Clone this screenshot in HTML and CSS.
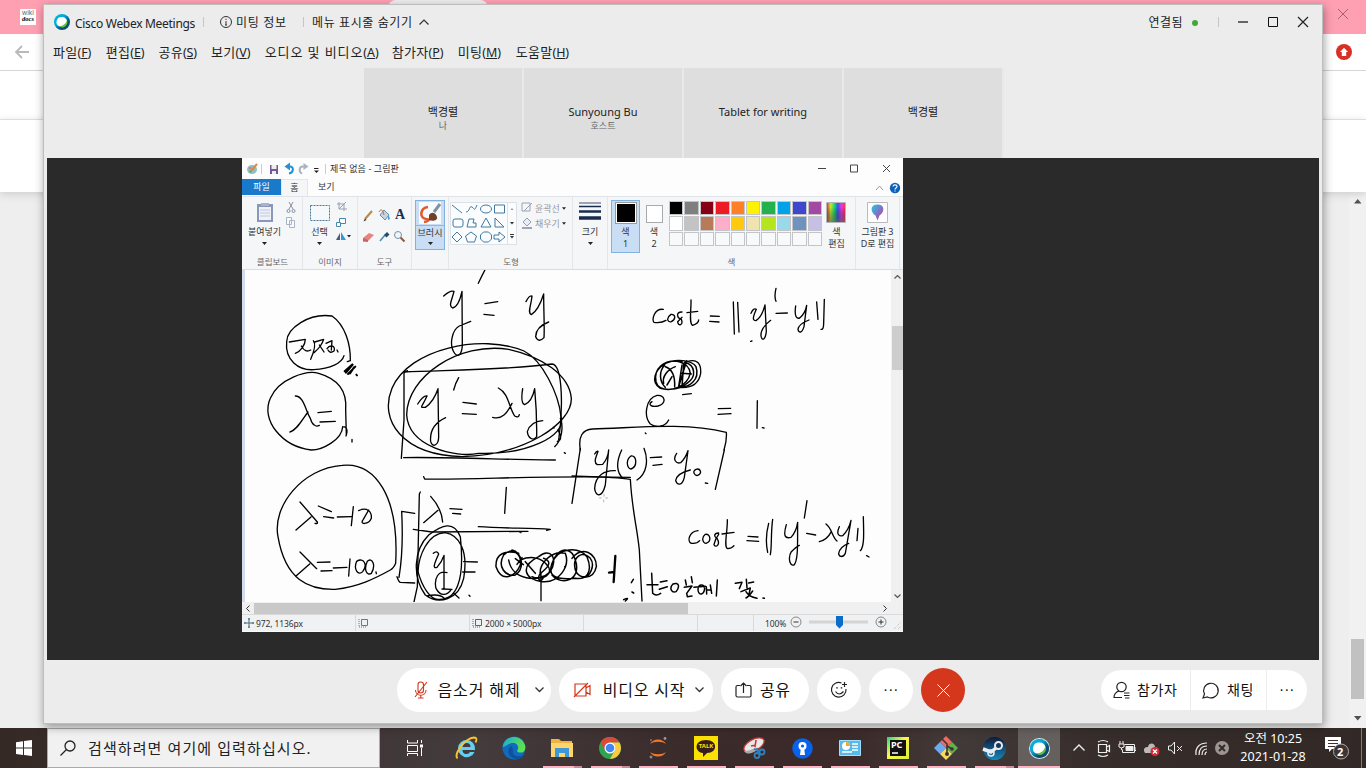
FILE: index.html
```html
<!DOCTYPE html>
<html lang="ko">
<head>
<meta charset="utf-8">
<title>Cisco Webex Meetings</title>
<link rel="stylesheet" href="styles.css">
</head>
<body>
<svg width="0" height="0" class="defs">
  <defs>
    <linearGradient id="ring" x1="0" y1="0" x2="1" y2="1"><stop offset="0" stop-color="#0bd"/><stop offset=".4" stop-color="#00a8dc"/><stop offset=".65" stop-color="#07507c"/><stop offset="1" stop-color="#17445f"/></linearGradient>
    <linearGradient id="rainbow"><stop offset="0" stop-color="#e33"/><stop offset=".2" stop-color="#be3"/><stop offset=".4" stop-color="#2d6"/><stop offset=".6" stop-color="#35e"/><stop offset=".8" stop-color="#e3e"/><stop offset="1" stop-color="#f34"/></linearGradient>
    <linearGradient id="dark" x1="0" y1="0" x2="0" y2="1"><stop offset=".2" stop-color="#000" stop-opacity="0"/><stop offset="1" stop-color="#555" stop-opacity=".6"/></linearGradient>
    <linearGradient id="pin" x1="0" y1="0" x2="1" y2="1"><stop offset="0" stop-color="#2cd"/><stop offset=".5" stop-color="#77c"/><stop offset="1" stop-color="#e36"/></linearGradient>
    <linearGradient id="edge" x1="0" y1="0" x2="1" y2=".3"><stop offset="0" stop-color="#1aa7dc"/><stop offset="1" stop-color="#5be34d"/></linearGradient>
    <linearGradient id="steam" x1="0" y1="0" x2="0" y2="1"><stop offset="0" stop-color="#101a3a"/><stop offset="1" stop-color="#1787bb"/></linearGradient>
    <linearGradient id="pycharm" x1="0" y1="0" x2="1" y2="1"><stop offset="0" stop-color="#21d789"/><stop offset=".45" stop-color="#fcf84a"/><stop offset="1" stop-color="#d8ef3d"/></linearGradient>
    <symbol id="webex" viewBox="0 0 16 16"><circle cx="8" cy="8" r="8" fill="url(#ring)"/><path d="M8 3a5 5 0 0 0-3 9.300C10 13 13.500 10 13 6.500A5.200 5.200 0 0 0 8 3z" fill="#fff"/><path d="M13 6a5.300 5.300 0 0 1-8 6.300C9.500 12 12 9.500 13 6z" fill="#62bf47"/></symbol>
    <symbol id="caret" viewBox="0 0 5 3"><path d="M0 0h5L2.500 3z" fill="#222"/></symbol>
  </defs>
</svg>
<div class="desktop">
  <div class="browser">
    <div class="tabstrip"><span class="favicon"><span>wiki</span><b>docs</b></span><i class="tab-peek"></i><svg class="tab-x" width="12" height="12" viewBox="0 0 12 12"><path d="M1 1l10 10M11 1L1 11" stroke="#a8606f" fill="none"/></svg></div>
    <div class="toolbar"><svg width="14" height="14" viewBox="0 0 14 14" fill="none" stroke="#b9b9b9" stroke-width="1.800"><path d="M14 7H1M7 1L1 7l6 6"/></svg><svg width="16" height="16" viewBox="0 0 16 16"><circle cx="8" cy="8" r="8" fill="#d93025"/><path d="M8 3.800l4 4.200H10.200v4H5.800V8H4z" fill="#fff"/></svg></div>
    <div class="bookmarks"></div>
    <div class="page-head"></div>
    <div class="page-body"><div class="scroll"><svg width="8" height="5"><path d="M0 4.500h7.500L3.700 0z" fill="#505050"/></svg><i></i><svg width="8" height="5"><path d="M0 0h7.500L3.700 4.500z" fill="#505050"/></svg></div></div>
  </div>

  <div class="webex">
    <div class="titlebar">
      <svg width="16" height="16"><use href="#webex"/></svg>
      <span class="app-name">Cisco Webex Meetings</span><i class="sep s1"></i>
      <svg class="info" width="12" height="12" viewBox="0 0 12 12" fill="none" stroke="#333"><circle cx="6" cy="6" r="5.500"/><path d="M6 5v4M6 2.800v1.200M5 9h2"/></svg>
      <span class="t-info">미팅 정보</span><i class="sep s2"></i>
      <span class="t-hide">메뉴 표시줄 숨기기</span>
      <svg width="10" height="6" viewBox="0 0 10 6" fill="none" stroke="#333" stroke-width="1.200"><path d="M.5 5.500L5 1l4.500 4.500"/></svg>
      <span class="grow"></span>
      <span class="t-conn">연결됨</span><i class="dot"></i><i class="sep s3"></i>
      <svg width="70" height="12" viewBox="0 0 70 12" fill="none"><path d="M0 6h10" stroke="#666" stroke-width="2"/><path d="M30.500 1.500h9v9h-9z" stroke="#111"/><path d="M60 1l10 10M70 1L60 11" stroke="#222" stroke-width="1.200"/></svg>
    </div>
    <div class="menubar">
      <span class="m41">파일<small>(<u>F</u>)</small></span><span class="m41">편집<small>(<u>E</u>)</small></span><span class="m41">공유<small>(<u>S</u>)</small></span><span class="m42">보기<small>(<u>V</u>)</small></span><span class="m115">오디오 및 비디오<small>(<u>A</u>)</small></span><span class="m54">참가자<small>(<u>P</u>)</small></span><span class="m46">미팅<small>(<u>M</u>)</small></span><span>도움말<small>(<u>H</u>)</small></span>
    </div>
    <div class="people">
      <div><b>백경렬</b><small>나</small></div><div><b>Sunyoung Bu</b><small>호스트</small></div><div><b>Tablet for writing</b></div><div><b>백경렬</b></div>
    </div>
    <div class="stage">
      <div class="paint">
        <div class="p-title">
          <svg width="88" height="14" viewBox="0 0 88 14"><ellipse cx="10" cy="7.500" rx="5" ry="4.500" fill="#8cc0c9"/><circle cx="8" cy="6" r="1" fill="#e66"/><circle cx="8.500" cy="9.500" r="1" fill="#3a7"/><path d="M9 9l6-7" stroke="#d9893a" stroke-width="2"/><path d="M19.500 2v10" stroke="#ccc"/><path d="M28 3h8v9h-8z" fill="#77579c"/><path d="M29.500 3h5v4h-5zM30 9h4v3h-4z" fill="#eee"/><path d="M46 4.500h2c4 0 4 6-1 7" fill="none" stroke="#2491d0" stroke-width="2"/><path d="M48 .5v8l-5.500-4z" fill="#2491d0"/><path d="M62 4.500h-1c-4.500 0-4 6-1 7" fill="none" stroke="#aab3c0" stroke-width="2"/><path d="M61.500 1v7l5-3.500z" fill="#aab3c0"/><path d="M72 6.500h4.500" stroke="#222"/><path d="M72 8.500h5l-2.500 2.500z" fill="#222"/><path d="M83.500 2v10" stroke="#ccc"/></svg>
          <span>제목 없음 - 그림판</span><i class="grow"></i>
          <svg width="74" height="9" viewBox="0 0 74 9" fill="none" stroke="#444"><path d="M0 4.500h8M32.500 1h7v7h-7zM65 1l7 7M72 1l-7 7"/></svg>
        </div>
        <div class="p-tabs"><span class="file">파일</span><span class="home">홈</span><span class="view">보기</span><i class="grow"></i><svg width="26" height="12" viewBox="0 0 26 12"><path d="M1 8l3.500-4L8 8" fill="none" stroke="#999"/><circle cx="20" cy="6" r="5.200" fill="#0b62b8"/><path d="M18 4.500c.3-2.200 4-2 4 0C22 6 20 6 20 7.500M20 8.600v1" stroke="#fff" stroke-width="1.200" fill="none"/></svg></div>
        <div class="ribbon">
          <section class="g-clip"><div class="row">
            <div class="tool paste"><svg width="18" height="22" viewBox="0 0 18 22"><path d="M1 2h16v18H1z" fill="#8998ba"/><path d="M3 5h12v13H3z" fill="#eef1f8"/><path d="M5 1h8v3H5z" fill="#a9b4c9"/><path d="M4 8h10M4 11h10M4 14h10" stroke="#bfc8de"/></svg><span>붙여넣기</span><svg width="5" height="3"><use href="#caret"/></svg></div>
            <svg width="12" height="34" viewBox="0 0 12 34" fill="none" stroke="#8790a0"><path d="M3 0l4 7M7 0l-4 7"/><circle cx="2.500" cy="9" r="1.500"/><circle cx="7.500" cy="9" r="1.500"/><path d="M.5 15.500h5v7h-5zM3.500 18.500h5v7h-5z" stroke="#aab2c5" fill="#fafbfd"/></svg>
          </div><h6>클립보드</h6></section>
          <section class="g-img"><div class="row">
            <div class="tool"><svg width="20" height="22" viewBox="0 0 20 22"><path d="M.5 3.500h19v15H.5z" fill="#f4f9fc" stroke="#47799b" stroke-dasharray="2 1"/></svg><span>선택</span><svg width="5" height="3"><use href="#caret"/></svg></div>
            <svg width="16" height="42" viewBox="0 0 16 42" fill="none"><path d="M3 0v7h8M1 2h7v7M3 7l7-7" stroke="#98a1b5"/><path d="M3.500 16.500h6v5h-6z" stroke="#4588b0" fill="#fff"/><path d="M.5 20.500h4v4h-4z" stroke="#4588b0" fill="#fff"/><path d="M0 38l4-7v7z" fill="#557"/><path d="M5 30l5 8H5z" fill="#2f9bd8"/><path d="M11 33h4l-2 2.500z" fill="#222"/></svg>
          </div><h6>이미지</h6></section>
          <section class="g-tools"><div class="row"><svg width="46" height="46" viewBox="0 0 46 46"><path d="M3 17L10 9" stroke="#b9884d" stroke-width="2"/><path d="M1.500 19.500l1.500-3 1.500 1.500z" fill="#333"/><path d="M18 13l4-5 5 5-4 5z" fill="#c9d4e2" stroke="#6d8aa9"/><path d="M17 10c2-4 4-2 5 3" stroke="#b37350" fill="none"/><path d="M26 11l2 6-2 1z" fill="#46a0d8"/><path d="M1 36l6-5 5 2-6 6-5 1z" fill="#e88480"/><path d="M1 36l5 2v2l-5-1z" fill="#c95f5f"/><path d="M18 39l5-6" stroke="#4f8eb5" stroke-width="1.600"/><path d="M22 33l3-3 2.500 2.500-3 3z" fill="#294b6c"/><circle cx="36" cy="33" r="3.500" fill="#eef5fb" stroke="#7890a8"/><path d="M38.500 35.500l4 4" stroke="#8a5b43" stroke-width="2"/></svg><b class="letter">A</b></div><h6>도구</h6></section>
          <section class="g-brush"><div class="brush"><svg width="22" height="22" viewBox="0 0 22 22"><path d="M0 0h22v22H0z" fill="#f8fbfd"/><path d="M9 5C1 6 0 16 7 17c4 0 4 2-2 3" stroke="#e15a2b" stroke-width="2.600" fill="none"/><path d="M21 2l-6 8" stroke="#7f93a5" stroke-width="3"/><path d="M10 13c3-4 7-2 8 2 1 3-4 5-8 3z" fill="#6d412a"/></svg><span>브러시</span><svg width="5" height="3"><use href="#caret"/></svg></div></section>
          <section class="g-shapes"><div class="row">
            <svg width="70" height="43" viewBox="0 0 70 43" fill="none" stroke="#41799e"><path d="M.5.5h57v42H.5zM57.500.5h9v42h-9z" fill="#fbfcfe" stroke="#dce1e8"/><path d="M2 3l10 8M16 10c4 0 3-7 6-5s2 5 5-2"/><ellipse cx="36" cy="7" rx="5.500" ry="4"/><path d="M44.500 3h10v8h-10z"/><rect x="3" y="17" width="10" height="8" rx="2"/><path d="M17 25l2-8h5l-1 4h3v4zM31 25l5-9 5 9zM45 16v9h9zM7 30l5 5-5 5-5-5zM21 30l5.500 4-2 6h-7l-2-6zM33.500 30h5l3 3v4l-3 3h-5l-3-3v-4zM44 33h5v-3l6 5-6 5v-3h-5z"/><path d="M60.500 8l1.500-2 1.500 2z" fill="#999" stroke="none"/><path d="M60 20h4l-2 2.500zM60 34h4l-2 2.500zM60 32h4v1h-4z" fill="#333" stroke="none"/></svg>
            <div class="fillcol"><span><svg width="12" height="12" viewBox="0 0 12 12" fill="none" stroke="#9ba4b2"><path d="M1 1h8v8H1zM3 9l8-8"/></svg>윤곽선 <svg width="4" height="3"><use href="#caret"/></svg></span><span><svg width="12" height="12" viewBox="0 0 12 12"><path d="M2 5l4-4 4 4-4 4z" fill="#e9eef4" stroke="#929daf"/><path d="M1 10h10v2H1z" fill="#9ba7b8"/></svg>채우기 <svg width="4" height="3"><use href="#caret"/></svg></span></div>
          </div><h6>도형</h6></section>
          <section class="g-size"><div class="tool"><svg width="22" height="22" viewBox="0 0 22 22" stroke="#172c4d"><path d="M0 1h22" stroke-width=".8"/><path d="M0 4.500h22" stroke-width="1.500"/><path d="M0 9.500h22" stroke-width="2.500"/><path d="M0 16h22" stroke-width="3.500"/></svg><span>크기</span><svg width="5" height="3"><use href="#caret"/></svg></div></section>
          <section class="g-color"><div class="row">
            <div class="tool c1"><i></i><span>색<br>1</span></div><div class="tool c2"><i></i><span>색<br>2</span></div>
            <div class="swatches"><i class="k1"></i><i class="k2"></i><i class="k3"></i><i class="k4"></i><i class="k5"></i><i class="k6"></i><i class="k7"></i><i class="k8"></i><i class="k9"></i><i class="k10"></i><i class="k11"></i><i class="k12"></i><i class="k13"></i><i class="k14"></i><i class="k15"></i><i class="k16"></i><i class="k17"></i><i class="k18"></i><i class="k19"></i><i class="k20"></i><i></i><i></i><i></i><i></i><i></i><i></i><i></i><i></i><i></i><i></i></div>
            <div class="tool edit"><svg width="20" height="21" viewBox="0 0 20 21"><path d="M.5.5h19v20H.5z" fill="#fff" stroke="#b5b5b5"/><path d="M1 1h18v19H1z" fill="url(#rainbow)"/><path d="M1 1h18v19H1z" fill="url(#dark)"/></svg><span>색<br>편집</span></div>
          </div><h6>색</h6></section>
          <section class="g-3d"><div class="tool edit"><svg width="21" height="21" viewBox="0 0 21 21"><path d="M.5.500h20v20H.5z" fill="#fdfdfe" stroke="#bbb"/><path d="M10.500 2.500c8 0 7 8 2 11l-2 5-2-5c-5-3-6-11 2-11z" fill="url(#pin)"/></svg><span>그림판 3<br>D로 편집</span></div></section>
        </div>
        <div class="p-main">
          <svg class="ink" width="646" height="332" viewBox="245 270 646 332">
            <g transform="translate(242 270) scale(.33333)">
              <path d="M734 -10Q718 20 709 40M605 78Q625 60 636 64C630 90 618 108 632 114Q650 110 660 64L661 225C660 250 650 265 638 250C620 225 630 180 652 168L686 154M729 101L767 95M726 133L756 136M852 95Q862 75 870 78C868 105 855 130 868 134Q890 120 905 72C905 120 908 180 906 203Q890 220 881 200Q882 170 920 156"/>
              <path d="M270 138C200 128 135 175 134 215C128 270 170 302 215 299C265 296 300 280 306 257M270 138C310 165 326 225 325 272L316 275M142 216L190 208C190 225 175 245 160 250M178 228Q190 250 206 240M214 212Q225 225 206 268M218 216L245 208C238 230 225 240 216 248M232 225L246 246M252 220L270 212L268 240M255 236C265 222 282 228 276 243Q264 252 258 240M285 240l3 6"/>
              <path d="M308 304l22-20M312 308l20-24M318 312l22-22M324 310l12-18M343 314l2 2" stroke-width="6"/>
              <path d="M302 470C300 510 240 540 208 540C120 530 55 450 85 385C110 325 195 300 230 310C300 330 315 375 311 420L313 494M302 470C320 470 315 490 312 498M160 378C185 378 190 420 205 445C210 465 222 472 232 466M198 426C180 450 165 480 144 486M228 428L268 424M234 456L280 454M330 508v8"/>
              <path d="M486 306C620 300 800 300 930 282C965 285 962 430 950 510M486 306V450L478 565M485 563C600 560 820 570 940 570M487 308L496 302"/>
              <path d="M846 243C720 190 500 235 450 355C410 450 480 555 660 560C850 555 990 460 988 385C982 315 900 260 800 238C650 215 495 320 494 435C500 530 640 565 710 550C850 555 975 500 957 440C950 370 900 270 846 243"/>
              <path d="M650 323Q640 340 635 360M527 402Q545 375 555 378C540 412 530 414 550 412Q575 395 588 356L590 500C590 525 572 535 566 515C562 475 585 455 611 443M663 397L703 402M661 431L703 433M769 354C800 370 800 410 818 438Q830 445 832 434M810 400C795 430 780 450 752 442M842 356Q835 400 848 404Q870 395 878 356Q885 430 884 500C875 515 858 505 856 485Q865 455 902 452M934 472l2 2M955 445C965 470 960 510 938 530M948 480Q965 510 946 514"/>
            </g>
            <g transform="translate(242 450) scale(.33333)">
              <path d="M461 340C472 140 400 35 300 46C180 55 90 170 108 260C130 390 200 420 280 418C350 410 400 385 445 360Q455 355 461 340M174 156L226 216Q228 222 219 220M207 201L162 240M229 168L268 185M245 200L275 204M286 201L328 200M334 170L328 227M350 182C375 170 390 185 388 205C380 225 350 225 364 208L380 180M174 306L224 356M203 342L162 378M226 337L264 336M237 363L270 362M274 354L315 352M324 327L320 378M344 334C333 360 350 378 362 365C378 345 365 320 344 334M376 334C364 360 375 378 388 370C403 345 390 320 376 334M402 366l1 5"/>
              <path d="M518 190L479 184C483 260 478 340 471 382M465 380Q470 395 475 397L518 399M545 80L548 87C700 90 900 75 1165 82M535 126L532 132L526 410L516 456M566 139C590 165 600 190 602 216M588 181L545 218M624 176L660 178M632 190L656 192M793 112L788 190M514 238L570 246L858 244M829 244l8 4M709 230C780 235 860 234 925 238L914 241"/>
              <path d="M655 260C635 210 600 225 560 255C515 300 510 380 550 435C590 465 650 450 665 385C680 300 650 255 610 248C555 250 530 320 528 365C540 410 565 450 590 448C640 450 670 400 655 260M574 310Q585 300 590 312C575 345 572 356 585 352Q600 335 606 316L606 417M615 368C590 360 575 385 582 415C595 440 615 438 628 418M630 418L600 417M555 438Q590 430 606 444M635 430l16 14M665 335L706 336M662 366L699 366M681 436l3 3M967 8l3 2M897 370L897 452"/>
              <path class="scribble" d="M830 310C790 300 760 310 762 350C780 400 820 380 835 345C840 310 810 290 785 315C765 350 790 380 820 375C850 355 840 305 810 300M800 330C810 390 890 400 925 365C950 325 925 290 890 320C830 350 850 390 900 395C950 400 985 350 970 310C930 300 890 340 895 375M850 335L880 370M835 330C870 315 900 325 915 345C940 370 900 395 870 380M905 325C935 335 915 355 895 370C880 390 900 400 905 380M930 340C950 290 1010 290 1035 320C1055 370 1030 390 1000 385C940 390 905 380 940 320C960 290 990 295 1000 330C1020 390 960 410 930 375M990 325C1020 285 1065 310 1063 350C1055 390 1010 390 1000 360C990 320 1020 300 1045 325C1060 345 1045 385 1020 380M820 326l24 18M825 343l15-20M968 350l2 2"/>
            </g>
            <g transform="translate(572 270) scale(.33333)">
              <path d="M274 118C245 115 240 150 246 157Q268 160 282 151M297 133C280 145 288 158 298 155C315 145 308 132 297 133M330 126C310 125 315 145 328 148C335 166 318 170 317 155L330 142M357 90C358 120 350 160 362 166Q380 160 380 150M345 128L377 124M415 138L442 139M413 154L441 156M484 96L487 192M497 97L501 186M612 55Q606 80 612 94M537 130Q545 112 553 118C543 140 540 152 552 152Q570 140 579 105L583 185C580 210 570 214 567 198Q565 175 596 151M612 130L646 129M671 108C667 135 672 148 683 144Q700 130 704 106L696 170C690 190 680 190 678 178Q680 162 711 150M734 96L738 148M757 88L755 160Q755 180 747 178M536 214l4-1"/>
              <path class="scribble" d="M270 288C300 260 350 275 355 310C345 350 300 365 265 355C235 335 248 300 280 280C310 265 360 270 372 290C385 330 350 355 320 350L344 272M330 275C270 265 245 300 252 335C260 370 325 360 345 340C375 320 370 285 338 277M278 285C260 305 262 335 280 352M310 290C285 300 270 320 275 340M280 290Q310 300 308 350M330 285L320 350M335 282L330 350M330 310L358 312M285 345L300 320"/>
              <path d="M345 275C375 265 388 280 386 310C380 345 355 355 320 352M332 374L358 371M240 395C225 405 242 412 258 408C285 400 280 375 255 376C220 385 215 440 235 462C255 475 280 470 290 450M439 416L476 415M438 433L477 431M556 392L555 475M571 473l5 1M220 489l2 2M25 540Q15 480 62 477C180 475 330 455 463 487Q465 510 456 540"/>
            </g>
            <g transform="translate(572 450) scale(.33333)">
              <path d="M25 -5L0 160M457 0L430 118M68 12Q74 2 78 4C70 25 65 38 76 44L92 43Q108 25 110 0L100 105C90 145 70 140 68 115C70 75 100 60 130 62M149 0C130 40 135 70 154 86M177 18C160 30 165 55 177 57C197 50 195 15 177 18M216 -5C230 30 225 70 195 90M235 23L269 21M243 46L270 43M314 10C300 30 314 42 326 38Q340 25 348 2L337 82C330 110 315 105 311 92Q314 70 355 60M372 58C358 65 370 78 377 76C392 70 385 54 372 58M400 99l7 1M0 78C50 80 120 80 175 88C180 180 195 230 202 300L210 453M705 152L697 204"/>
              <path d="M378 242C350 245 345 275 358 280Q375 282 383 272M400 253C385 265 395 280 402 280C420 275 415 250 400 253M440 249C424 250 426 260 435 265C447 285 430 295 426 284Q430 265 440 253M466 209C467 245 454 292 467 296Q480 295 486 287M450 252L486 247M528 259L558 261M525 272L560 274M590 220Q578 265 587 307M602 208C596 250 600 290 595 314M643 224C633 258 639 267 657 262Q673 245 677 217C676 270 680 330 666 345C652 350 648 320 658 305Q673 290 682 286M704 250L731 255M762 222C780 235 780 260 795 273M778 245Q765 270 742 275M802 230C792 252 800 260 812 257Q830 240 837 211L820 310C812 325 800 320 800 310Q804 290 830 280M858 235L855 272M874 200C875 245 878 290 865 302M884 317l7 4"/>
              <path d="M130 318L125 396M111 368L126 366" stroke-width="7"/>
              <path d="M184 388l-6 10M180 426l5 3M155 449Q175 440 160 453M239 370L242 430Q252 440 266 430M225 404L258 404M265 396L285 392M262 418L286 410M303 402C290 415 300 430 312 425C325 410 320 395 303 402M340 390l3 15M358 380l3 18M337 412L360 408L344 430L346 440L360 438M366 412L400 409M378 420C378 402 395 400 398 415C396 435 380 438 378 420M403 410l1 22M415 405L419 430M404 420h12M436 390L433 438M490 400L510 397L502 416M523 388L525 413M530 399L545 396M507 425L535 414L530 438M522 425Q530 440 555 445M542 423Q530 440 522 444M573 444l4 1" stroke-width="4.500"/>
              <path d="M96 133v7M95 150v7M82 144h7M101 144h7" stroke="#999" stroke-width="2" stroke-dasharray="2 2"/>
            </g>
          </svg>
          <div class="vbar"><svg width="7" height="4"><path d="M.5 3.500l3-3 3 3" fill="none" stroke="#555" stroke-width="1.200"/></svg><i></i><svg width="7" height="4"><path d="M.5.500l3 3 3-3" fill="none" stroke="#555" stroke-width="1.200"/></svg></div>
        </div>
        <div class="hbar"><svg width="4" height="7"><path d="M3.500.500l-3 3 3 3" fill="none" stroke="#333"/></svg><i></i><svg width="4" height="7"><path d="M.5.500l3 3-3 3" fill="none" stroke="#333"/></svg></div>
        <div class="status">
          <span class="st1"><svg width="10" height="10" viewBox="0 0 10 10" stroke="#467"><path d="M0 5h10M5 0v10M1 4v2M9 4v2M4 1h2M4 9h2"/></svg>972, 1136px</span>
          <span class="st2"><svg width="11" height="10" viewBox="0 0 11 10" fill="none" stroke="#678"><path d="M3.500 1.500h6v6h-6z"/><path d="M1 1v8h8" stroke-dasharray="1 1"/></svg></span>
          <span class="st3"><svg width="11" height="10" viewBox="0 0 11 10" fill="none" stroke="#567"><path d="M3.500 1.500h6v6h-6z"/><path d="M1 1v8h8" stroke-dasharray="1 1"/></svg>2000 × 5000px</span>
          <span class="st4"></span><span class="st5"></span>
          <span class="st6">100%<svg width="112" height="14" viewBox="0 0 112 14" fill="none" stroke="#888"><circle cx="6" cy="6" r="5"/><path d="M3.500 6h5" stroke="#333"/><path d="M19 6h59" stroke="#d4d4d4" stroke-width="3"/><path d="M46 0h7v9l-3.500 3.500L46 9z" fill="#0b6dc9" stroke="none"/><circle cx="91" cy="6" r="5"/><path d="M88.500 6h5M91 3.500v5" stroke="#333"/><path d="M104 13l7-7M108 13l3-3" stroke="#bbb" stroke-dasharray="1 1"/></svg></span>
        </div>
      </div>
    </div>
    <div class="controls">
      <button class="pill mute"><svg width="14" height="18" viewBox="0 0 14 18" fill="none" stroke="#d4371c" stroke-width="1.100"><rect x="4" y="1" width="5.500" height="11" rx="2.700"/><path d="M1.500 9c0 7 10.500 7 10.500 0M6.800 14v3M4 17h5.500M1 16L13 1"/></svg><span>음소거 해제</span><svg width="9" height="6"><path d="M.5.500l4 4 4-4" fill="none" stroke="#333" stroke-width="1.300"/></svg></button>
      <button class="pill video"><svg width="17" height="14" viewBox="0 0 17 14" fill="none" stroke="#d4371c" stroke-width="1.200"><path d="M1 1h11v12H1zM0 14L14 0M12 5l4-2.500v9L12 9"/></svg><span>비디오 시작</span><svg width="9" height="6"><path d="M.5.500l4 4 4-4" fill="none" stroke="#333" stroke-width="1.300"/></svg></button>
      <button class="pill share"><svg width="17" height="16" viewBox="0 0 17 16" fill="none" stroke="#222" stroke-width="1.200"><path d="M5 3.500H2.500Q1 3.500 1 5v8.500Q1 15 2.500 15h12q1.500 0 1.500-1.500V5q0-1.500-1.500-1.500H12M8.500 11V1M5.500 4l3-3 3 3"/></svg><span>공유</span></button>
      <button class="round"><svg width="17" height="18" viewBox="0 0 17 18" fill="none" stroke="#222" stroke-width="1.200"><path d="M10.500 2A7.300 7.300 0 1 0 15 8M4.500 10.500q3.500 5 8 0M13.500 1v5M11 3.500h5"/><path d="M6 6.200v1.300M10.500 6.200v1.300" stroke-width="1.600"/></svg></button>
      <button class="round dots">•••</button>
      <button class="round end"><svg width="13" height="13"><path d="M.5.500l12 12M12.500.500l-12 12" stroke="#fff"/></svg></button>
      <div class="right">
        <button class="r1"><svg width="17" height="18" viewBox="0 0 17 18" fill="none" stroke="#222" stroke-width="1.200"><circle cx="8.500" cy="6" r="4.700"/><path d="M6 10c-3 1-5 3-5 6.500h8M11 12h5.500M11 14.500h5.500M12 17h4.500"/></svg><span>참가자</span></button>
        <button class="r2"><svg width="17" height="17" viewBox="0 0 17 17" fill="none" stroke="#222" stroke-width="1.200"><path d="M1 16l1.500-4A7.300 7.300 0 1 1 5.500 15z"/></svg><span>채팅</span></button>
        <button class="r3 dots">•••</button>
      </div>
    </div>
  </div>

  <div class="taskbar">
    <div class="start"><svg width="16" height="16" viewBox="0 0 16 16" fill="#fff"><path d="M0 2.300L7 1.200v6.400H0zM8 1l8-1v7.600H8zM0 8.500h7v6.400l-7-1zM8 8.500h8V16l-8-1z"/></svg></div>
    <div class="search"><svg width="16" height="16" viewBox="0 0 16 16" fill="none" stroke="#222" stroke-width="1.300"><circle cx="10" cy="6" r="5"/><path d="M6.500 9.500L.5 15.500"/></svg><span>검색하려면 여기에 입력하십시오.</span></div>
    <div class="apps">
      <div class="view-tasks"><svg width="18" height="18" viewBox="0 0 18 18" fill="none" stroke="#fff"><path d="M1.500 1v3h10V1M1.500 6.500h10v6h-10zM1.500 17v-2.500h10V17M15.500 1v3M15.500 9v8"/><path d="M14 5.500h3v3h-3z" fill="#fff" stroke="none"/></svg></div>
      <div><svg width="24" height="24" viewBox="0 0 24 24" fill="none"><path fill-rule="evenodd" d="M12.500 4a8.500 8.500 0 0 1 8.500 10H8.500a4 4 0 0 0 7.500 2h4.500A8.600 8.600 0 1 1 12.500 4zM8.500 11h8a4 4 0 0 0-8 0z" fill="#65cff3"/><path d="M3.500 22.500C-1 19 11 2 20 1.500c3 0 3 2 1.500 5" stroke="#f5c62b" stroke-width="1.800"/></svg></div>
      <div><svg width="24" height="24" viewBox="0 0 24 24"><circle cx="12" cy="12" r="11.500" fill="#0f6bbd"/><path d="M.6 11C2-1 19-3 23 9c2 8-6 9-8 6 3-4 0-8-4-8-5 0-7 4-10.400 4z" fill="url(#edge)"/><path d="M9 10c-6 5-1 13 6 13 4 0 6-2 7-4-7 3-12 0-11-4 0-3-1-4-2-5z" fill="#12509e"/></svg></div>
      <div class="open multi"><svg width="22" height="20" viewBox="0 0 22 20"><path d="M0 1h8l2 2h11v16H0z" fill="#f0b33f"/><path d="M0 5h22v14H0z" fill="#fed56c"/><path d="M4 19v-9h14v9h-4v-4H8v4z" fill="#3f98d5"/></svg></div>
      <div class="open multi"><svg width="22" height="22" viewBox="0 0 22 22"><circle cx="11" cy="11" r="11" fill="#2ea44f"/><path d="M11 0a11 11 0 0 1 9.500 5.500H11A6 6 0 0 0 6 14L1.500 5.500A11 11 0 0 1 11 0z" fill="#d94a3d"/><path d="M20.500 5.500A11 11 0 0 1 11 22l5-9c1-3 0-6-5-7.500z" fill="#f9cb3e"/><circle cx="11" cy="11" r="5.500" fill="#fff"/><circle cx="11" cy="11" r="4.300" fill="#4285f4"/></svg></div>
      <div class="open"><svg width="20" height="22" viewBox="0 0 20 22"><path d="M2 7C5 1 15 1 18 7c-4-3-12-3-16 0zM2 15c3 6 13 6 16 0-4 3-12 3-16 0z" fill="#f37726"/><circle cx="17" cy="1.500" r="1.400" fill="#999"/><circle cx="3" cy="3" r="1" fill="#777"/><circle cx="3" cy="20" r="1.500" fill="#888"/></svg></div>
      <div class="open kakao"><svg width="24" height="24" viewBox="0 0 24 24"><path d="M0 0h24v24H0z" fill="#fae100"/><path d="M12 4c12 0 12 13 1 13l-4 4v-4C0 16 0 4 12 4z" fill="#371d1e"/></svg><b>TALK</b></div>
      <div class="open"><svg width="24" height="22" viewBox="0 0 24 22"><ellipse cx="12" cy="8" rx="11" ry="5.500" transform="rotate(-28 12 8)" fill="#e9e9e9" stroke="#c9403c" stroke-width="1.200"/><path d="M2 14c3 4 8 3 13-1l-1-3c-4 3-9 4-12 4z" fill="#aaa"/><path d="M9 9l5-1M13 10l1-7" stroke="#c33" stroke-width="1.600" fill="none"/><g fill="none" stroke="#2d83bf" stroke-width="1.800"><circle cx="15" cy="18.500" r="2.500"/><circle cx="20" cy="15" r="2.500"/><path d="M16 16l-1-5M18 14l-6-2"/></g></svg></div>
      <div class="open"><svg width="21" height="21" viewBox="0 0 21 21"><circle cx="10.500" cy="10.500" r="10.200" fill="#0763ed"/><circle cx="10.500" cy="8" r="4" fill="#fff"/><path d="M9 9h3l1 8H8z" fill="#fff"/><circle cx="10.500" cy="8" r="1.600" fill="#0763ed"/></svg></div>
      <div class="open"><svg width="22" height="16" viewBox="0 0 22 16"><path d="M.5.500h21v15H.5z" fill="#58b8e8" stroke="#9de0ff"/><circle cx="7" cy="6" r="4" fill="#fff"/><path d="M7 6V2a4 4 0 0 1 4 4z" fill="#eea92a"/><path d="M13 4h6M13 7h6M13 10h6M3 12h10" stroke="#fff" stroke-width="1.700"/></svg></div>
      <div class="open pc"><svg width="22" height="22" viewBox="0 0 22 22"><path d="M0 0h22v22H0z" fill="url(#pycharm)"/><path d="M3 3h16v16H3z" fill="#111"/><path d="M5 16h6" stroke="#fff" stroke-width="1.500"/></svg><b>PC</b></div>
      <div class="open"><svg width="24" height="24" viewBox="0 0 24 24"><path d="M6 6l6-6 6 6-6 6z" fill="#ef6b60"/><path d="M0 12l6-6 6 6-6 6z" fill="#6daaf0"/><path d="M12 12l6-6 6 6-6 6z" fill="#62b24b"/><path d="M6 18l6-6 6 6-6 6z" fill="#f6db62"/><path d="M8 3l5 5v11M13 10l5 3" stroke="#3b3435" stroke-width="1.600" fill="none"/><circle cx="13" cy="18" r="2" fill="#3b3435"/><circle cx="18" cy="13" r="1.800" fill="#3b3435"/></svg></div>
      <div class="open multi"><svg width="23" height="23" viewBox="0 0 23 23"><circle cx="11.500" cy="11.500" r="11.500" fill="url(#steam)"/><path d="M0 12l8 3 5-4" stroke="#e9edf1" stroke-width="3.500" fill="none"/><circle cx="8" cy="16" r="3" fill="none" stroke="#e9edf1" stroke-width="1.500"/><circle cx="15.500" cy="8.500" r="3.500" fill="#1b3358" stroke="#e9edf1" stroke-width="2"/></svg></div>
      <div class="open active"><svg class="wx" width="19" height="19"><use href="#webex"/></svg></div>
    </div>
    <div class="tray">
      <svg width="156" height="20" viewBox="0 0 156 20" fill="none" stroke="#eee"><path d="M.5 12.500L6 7l5.500 5.500" stroke-width="1.400"/><path d="M25.500 6.500h8v8h-8zM33.500 9l3-1.500v6l-3-1.500M25 4q5-3 10 0M25 17q5 3 10 0" stroke-width="1.200"/><path d="M51.500 6.500h10v8h-12v-3M62 9v3.500h1"/><path d="M53 8.500h7v4h-7z" fill="#eee"/><path d="M47 3v3M50 3v3M46 6h5v3q-3 2-5 0zM48.500 10v2" /><path d="M72 15c-3-5 1-6 3-6 1-5 7-4 7 0 4 0 4 5 2 6z" fill="#bbb" stroke="none"/><circle cx="82" cy="13.500" r="4.500" fill="#d52b35" stroke="none"/><path d="M80 11.500l4 4M84 11.500l-4 4" stroke="#fff" stroke-width="1.400"/><path d="M95.500 8h2.500l3.500-4v12L98 12h-2.500zM104 8l5 5M109 8l-5 5"/><path d="M123 17C122 9 127 5 134 5M126 17c0-6 3-9 8-9M129 17c0-4 2-6 5-6M132 17q0-3 2-3" stroke-width="1.200"/><circle cx="149" cy="10" r="7" fill="#9c9693" stroke="none"/><path d="M146 7l6 6M152 7l-6 6" stroke="#332b2a" stroke-width="2"/></svg>
      <div class="clock"><span>오전 10:25</span><span>2021-01-28</span></div>
      <div class="notice"><svg width="24" height="24" viewBox="0 0 24 24"><path d="M0 1h16v12H7l-3 3v-3H0z" fill="#fff"/><path d="M3 4.500h10M3 7.500h10M3 10.500h7" stroke="#3b3130"/><circle cx="16" cy="15.500" r="7.500" fill="#3d3534" stroke="#aaa"/></svg><b>2</b></div><i class="show"></i>
    </div>
  </div>
</div>
</body>
</html>
```
FILE: styles.css
```css
* { box-sizing: border-box; }
body { margin: 0; overflow: hidden; font-family: "Noto Sans", "Noto Sans CJK KR", sans-serif; color: #222; }
svg { display: block; flex: none; overflow: visible; }
.defs { position: absolute; }
i { font-style: normal; flex: none; }
.grow { flex: 1; }
.desktop { position: relative; width: 1366px; height: 768px; overflow: hidden; display: flex; flex-direction: column; white-space: nowrap; }

.browser { height: 728px; display: flex; flex-direction: column; background: #eee; }
.tabstrip { height: 34px; background: #ff9fb2; display: flex; align-items: flex-start; padding: 9px 17px 0 20px; }
.favicon { width: 16px; height: 16px; background: #fff; font-size: 6.5px; line-height: 7px; text-align: center; color: #666; display: flex; flex-direction: column; }
.favicon b { font-family: "Liberation Serif", serif; font-style: italic; color: #000; line-height: 6px; }
.tab-peek { width: 100px; height: 14px; margin: -9px auto 0 352px; border-radius: 8px 8px 0 0; background: #eee; }
.tab-x { margin-top: -1px; }
.toolbar { height: 37px; background: #fff; border-bottom: 1px solid #d5d5d5; display: flex; align-items: center; justify-content: space-between; padding: 0 14px 0 15px; }
.bookmarks { height: 49px; background: #fff; border-bottom: 1px solid #e3e3e3; }
.page-head { height: 72px; background: #fff; box-shadow: 0 2px 8px #ccc; z-index: 1; }
.page-body { flex: 1; display: flex; justify-content: flex-end; }
.scroll { width: 17px; background: #f1f1f1; display: flex; flex-direction: column; align-items: center; padding: 7px 0 7px; }
.scroll i { width: 13px; height: 60px; background: #c1c1c1; margin-top: 435px; margin-bottom: auto; }

.webex { position: absolute; z-index: 2; left: 43px; top: 4px; width: 1280px; height: 720px; border: 1px solid #bebebe; background: #ececec; box-shadow: 1px 3px 9px rgba(0,0,0,.38); display: flex; flex-direction: column; }
.titlebar { height: 34px; padding: 0 14px 0 10px; display: flex; align-items: center; font-size: 12px; }
.app-name { width: 121px; margin-left: 5px; letter-spacing: -.3px; padding-top: 2px; }
.sep { width: 1px; height: 10px; background: #c6c6c6; }
.s1 { margin-left: 7px; }
.info { margin-left: 16px; }
.t-info { width: 52px; margin-left: 4px; letter-spacing: .7px; }
.s2 { margin-left: 15px; }
.t-hide { width: 102px; margin: 0 5px 0 8px; letter-spacing: .6px; }
.t-conn { letter-spacing: .5px; }
.dot { width: 6px; height: 6px; border-radius: 3px; background: #43a83c; margin: 1px 20px 0 9px; }
.s3 { margin-right: 19px; }
.menubar { height: 29px; padding-left: 9px; display: flex; gap: 12px; align-items: center; font-size: 13px; line-height: 20px; padding-bottom: 2px; }
.menubar span { letter-spacing: .3px; }
.menubar small { font-size: 12.500px; letter-spacing: -.1px; }
.menubar u { text-underline-offset: 1px; }
.menubar .m41 { width: 40.700px; } .menubar .m42 { width: 41.700px; } .menubar .m115 { width: 115px; letter-spacing: .9px; } .menubar .m54 { width: 54px; } .menubar .m46 { width: 46px; }
.people { height: 90px; display: flex; justify-content: center; margin-left: 2px; }
.people div { width: 160px; height: 90px; background: #dedede; border-right: 2px solid #e9e9e9; display: flex; flex-direction: column; align-items: center; padding-top: 35px; }
.people b { font-weight: 400; font-size: 11px; line-height: 17px; }
.people small { font-size: 9px; line-height: 11px; color: #666; }
.stage { height: 502px; margin: 0 3px; background: #2a2a2a; padding-left: 195px; display: flex; }

.paint { width: 661px; height: 474px; background: #fdfdfe; display: flex; flex-direction: column; font-size: 9px; color: #333; }
.p-title { height: 21px; display: flex; align-items: center; padding: 0 11px 0 0; }
.p-title span { letter-spacing: .1px; }
.p-tabs { height: 17px; display: flex; align-items: flex-start; padding-right: 2px; line-height: 16px; }
.p-tabs .file { width: 39px; height: 16px; background: #1979ca; color: #fff; text-align: center; }
.p-tabs .home { width: 27px; height: 17px; background: #f5f6f7; border: 1px solid #e3e6ea; border-bottom: 0; text-align: center; }
.p-tabs .view { padding-left: 10px; }
.p-tabs svg { margin-top: 3px; }
.ribbon { height: 74px; background: #f5f6f8; border-top: 1px solid #e0e3e8; border-bottom: 1px solid #d9dce2; display: flex; padding-left: 1px; }
.ribbon section { height: 72px; border-right: 1px solid #e4e6ea; display: flex; flex-direction: column; justify-content: space-between; }
.ribbon h6 { margin: 0; font-size: 8.500px; font-weight: 400; line-height: 13px; height: 14px; text-align: center; color: #666; }
.row { display: flex; }
.tool { display: flex; flex-direction: column; align-items: center; line-height: 11px; padding-top: 5px; text-align: center; }
.tool > span { height: 13px; line-height: 16px; }
.tool > svg:last-child { margin-top: 5px; }
.g-clip { width: 60px; } .g-clip .tool { width: 43px; } .row > svg { margin-top: 5px; }
.g-img { width: 55px; } .g-img .tool { width: 33px; }
.g-tools { width: 54px; position: relative; }
.g-tools .row { padding-left: 4px; }
.letter { position: absolute; left: 37px; top: 10px; font: bold 14px "Liberation Serif", serif; color: #172e55; }
.g-brush { width: 37px; align-items: center; }
.brush { width: 30px; height: 50px; margin-top: 3px; border: 1px solid #80b1df; background: #c9def4; display: flex; flex-direction: column; align-items: center; padding-top: 1px; }
.brush span { line-height: 13px; border-top: 1px solid #8db8e0; width: 28px; text-align: center; margin-top: 1px; }
.brush svg:last-child { margin-top: 3px; }
.g-shapes { width: 124px; padding-left: 1px; }
.fillcol { padding: 4px 0 0 1px; display: flex; flex-direction: column; gap: 1px; color: #999; }
.fillcol span { display: flex; align-items: center; gap: 2px; height: 14px; }
.g-size { width: 35px; }
.g-color { width: 248px; }
.c1 { width: 29px; height: 53px; margin: 3px 0 0 3px; background: #c9def4; border: 1px solid #80b1df; padding-top: 1px; }
.c1 i { width: 22px; height: 22px; background: #000; border: 1px solid #999; box-shadow: inset 0 0 0 1px #fff; margin-bottom: 2px; }
.c2 { width: 28px; padding-top: 8px; }
.c2 i { width: 17px; height: 18px; background: #fff; border: 1px solid #aaa; margin-bottom: 3px; }
.c1 > span, .c2 > span { line-height: 12px; height: 24px; }
.swatches { display: grid; grid-template-columns: repeat(10, 14.4px); grid-auto-rows: 14.4px; gap: 1px; margin: 4px 0 0 1px; }
.swatches i { border: 1px solid #c3c5c8; background: #f7f9fb; }
.swatches .k1 { background: #000; } .swatches .k2 { background: #7f7f7f; } .swatches .k3 { background: #880015; } .swatches .k4 { background: #ed1c24; } .swatches .k5 { background: #ff7f27; }
.swatches .k6 { background: #fff200; } .swatches .k7 { background: #22b14c; } .swatches .k8 { background: #00a2e8; } .swatches .k9 { background: #3f48cc; } .swatches .k10 { background: #a349a4; }
.swatches .k11 { background: #fff; } .swatches .k12 { background: #c3c3c3; } .swatches .k13 { background: #b97a57; } .swatches .k14 { background: #ffaec9; } .swatches .k15 { background: #ffc90e; }
.swatches .k16 { background: #efe4b0; } .swatches .k17 { background: #b5e61d; } .swatches .k18 { background: #99d9ea; } .swatches .k19 { background: #7092be; } .swatches .k20 { background: #c8bfe7; }
.edit { width: 29px; }
.edit > span { line-height: 12px; height: 26px; margin-top: 3px; }
.g-3d { width: 44px; }
.g-3d .edit { width: 43px; letter-spacing: -.1px; }

.p-main { height: 332px; display: flex; border-left: 3px solid #d4dceb; }
.ink { overflow: hidden; fill: none; stroke: #000; stroke-width: 4; stroke-linecap: round; stroke-linejoin: round; background: #fdfdfe; }
.scribble { stroke-width: 4.500; }
.vbar { width: 12px; background: #f0f0f0; display: flex; flex-direction: column; align-items: center; padding: 5px 0 4px; }
.vbar i { width: 11px; height: 44px; background: #cdcdcd; margin: 47px 0 auto; }
.hbar { height: 12px; background: #f0f0f0; display: flex; align-items: center; padding: 0 16px 0 4px; }
.hbar i { width: 434px; height: 11px; margin: 0 auto 0 4px; background: #c9c9c9; }
.status { height: 18px; background: #f0f1f2; border-top: 1px solid #dadada; border-bottom: 1px solid #fafafa; display: flex; font-size: 8.500px; }
.status span { display: flex; align-items: center; gap: 2px; border-right: 1px solid #d9d9d9; padding-left: 2px; letter-spacing: -.1px; }
.st1 { width: 114px; } .st2 { width: 114px; } .st3 { width: 114px; } .st4 { width: 114px; } .st5 { width: 56px; }
.status .st6 { flex: 1; border: 0; padding-left: 11px; gap: 4px; }

.controls { position: relative; height: 63px; display: flex; padding: 8px 15px 0 353px; gap: 8px; }
button { font: inherit; color: #111; border: 0; padding: 0; background: #fff; display: flex; align-items: center; font-size: 16px; }
.pill { height: 44px; border-radius: 22px; }
.pill span { margin-top: -2px; }
.mute { width: 154px; padding-left: 17px; } .mute span { width: 90px; margin-left: 6px; margin-right: 11px; letter-spacing: .9px; }
.video { width: 154px; padding-left: 15px; } .video span { width: 90px; margin-left: 8px; margin-right: 6px; letter-spacing: .8px; }
.share { width: 88px; padding-left: 14px; gap: 8px; }
.share span { letter-spacing: .5px; }
.round { width: 44px; height: 44px; border-radius: 22px; justify-content: center; }
.dots { font-size: 7px; letter-spacing: 2.500px; padding-left: 2px; }
.end { background: #d4371c; }
.right { margin-left: auto; margin-top: 2px; display: flex; gap: 1px; height: 40px; }
.right button { font-size: 14px; }
.right button span { margin-top: -2px; letter-spacing: .6px; }
.right .r1 { width: 89px; border-radius: 20px 0 0 20px; padding-left: 12px; gap: 7px; }
.right .r2 { width: 75px; padding-left: 11px; gap: 8px; }
.right .r3 { width: 40px; border-radius: 0 20px 20px 0; justify-content: center; font-size: 7px; }

.taskbar { height: 40px; background: linear-gradient(90deg, #352925, #443b3d 35%, #3b2b2b 50%, #3c2929 62%, #423a38 70%, #372e2b 80%, #322927); display: flex; }
.start { width: 47px; display: flex; align-items: center; justify-content: center; }
.search { width: 333px; background: #f1f1f1; border: 1px solid #aaa; display: flex; align-items: center; padding-left: 12px; gap: 12px; font-size: 15px; }
.search span { letter-spacing: 1.1px; margin-top: -2px; }
.apps { display: flex; margin-left: 11px; }
.apps > div { width: 48px; height: 40px; display: flex; align-items: center; justify-content: center; position: relative; }
.apps .view-tasks { margin-right: 3px; }
.open::after { content: ""; position: absolute; left: 5px; bottom: 0; width: 39px; height: 2px; background: #ffb0c1; }
.multi::after { background: linear-gradient(90deg, #ffb0c1 31px, #c98b99 31px); }
.apps .active { width: 42px; background: #655f5e; }
.active::after { left: 0; width: 42px; }
.wx { border-radius: 50%; box-shadow: 0 0 0 1px #d7eef5; }
.kakao b { position: absolute; font-size: 6px; color: #fae100; top: 14px; line-height: 8px; }
.pc b { position: absolute; left: 17px; top: 11px; color: #fff; font-size: 9px; line-height: 11px; }
.tray { display: flex; align-items: center; margin-left: auto; color: #fff; }
.clock { width: 78px; margin-left: 5px; text-align: center; font-size: 12.500px; line-height: 18px; display: flex; flex-direction: column; }
.notice { position: relative; margin-left: 13px; width: 24px; height: 24px; }
.notice b { position: absolute; left: 12px; top: 8px; font-size: 11px; line-height: 15px; }
.show { width: 1px; height: 40px; background: #827b79; margin: 0 4px 0 12px; }
```
